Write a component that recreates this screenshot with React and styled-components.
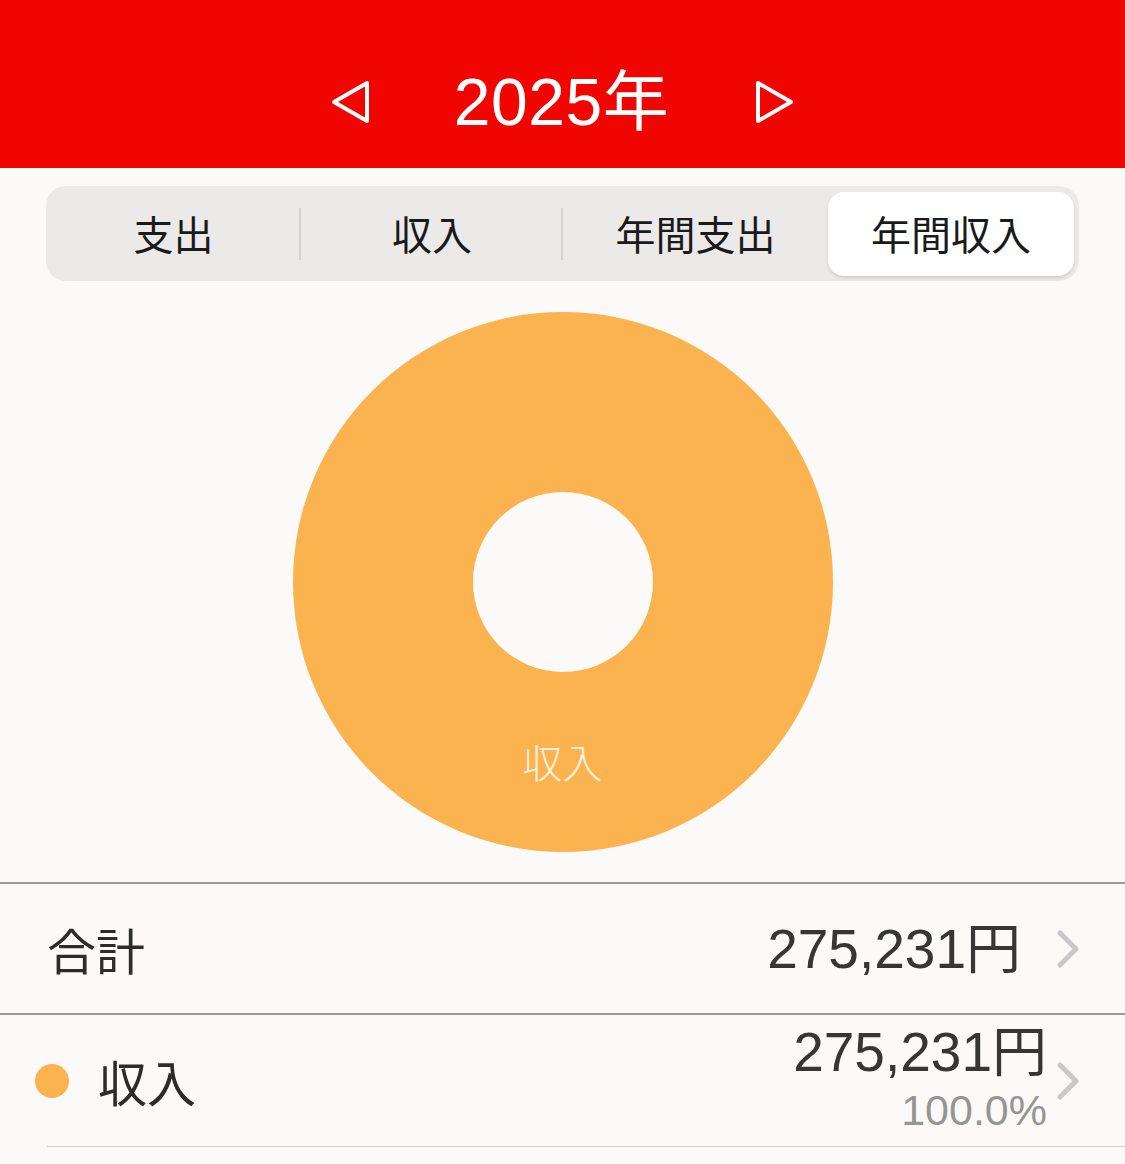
import React from "react";
import styled, { createGlobalStyle } from "styled-components";

const Global = createGlobalStyle`
  html, body { margin: 0; padding: 0; background: #fbfaf8; }
  body { font-family: "Noto Sans CJK JP", "Noto Sans", sans-serif; color: #333; }
`;

const NUM_FONT = `"Liberation Sans", "Noto Sans CJK JP", sans-serif`;

const Page = styled.div`
  width: 1125px;
  height: 1164px;
  overflow: hidden;
  background: #fbfaf8;
`;

const Header = styled.header`
  height: 168px;
  box-sizing: border-box;
  padding-top: 36px;
  background: #f00500;
  display: flex;
  align-items: center;
  justify-content: center;
`;

const NavButton = styled.button`
  width: 42px;
  height: 44px;
  border: none;
  background: none;
  padding: 0;
  display: flex;
  align-items: center;
  justify-content: center;
  cursor: pointer;
`;

const Year = styled.h1`
  margin: 0 84px 0 82px;
  font-family: ${NUM_FONT};
  font-size: 66px;
  font-weight: 400;
  color: #fff;
  line-height: 1;
  letter-spacing: 0.5px;
`;

const Segmented = styled.div`
  margin: 18px 46px 0;
  height: 95px;
  box-sizing: border-box;
  background: #ebeae9;
  border-radius: 20px;
  display: grid;
  grid-template-columns: 255px 262px 265px 246px;
  padding: 6px 5px 5px 0;
  align-items: stretch;
`;

const Tab = styled.div`
  position: relative;
  display: flex;
  align-items: center;
  justify-content: center;
  font-size: 40px;
  color: #1a1a1a;
  border-radius: 16px;
  padding-bottom: 2px;
  background: ${(p) => (p.$active ? "#fff" : "transparent")};
  box-shadow: ${(p) => (p.$active ? "0 2px 3px rgba(0,0,0,0.12)" : "none")};
  ${(p) =>
    p.$divider &&
    `&::after {
      content: "";
      position: absolute;
      right: 0;
      top: 16px;
      bottom: 16px;
      width: 2px;
      background: #d3d2d1;
    }`}
`;

const ChartArea = styled.div`
  height: 601px;
  display: flex;
  justify-content: center;
  padding-top: 31px;
  box-sizing: border-box;
`;

const Donut = styled.div`
  position: relative;
  width: 540px;
  height: 540px;
  border-radius: 50%;
  background: #fab34f;
  display: flex;
  align-items: center;
  justify-content: center;
`;

const Hole = styled.div`
  width: 180px;
  height: 180px;
  border-radius: 50%;
  background: #fbfaf8;
`;

const SliceLabel = styled.span`
  position: absolute;
  left: 0;
  right: 0;
  top: 429px;
  text-align: center;
  color: #fdf3e0;
  font-size: 40px;
  font-weight: 300;
  line-height: 1;
`;

const List = styled.div`
  border-top: 2px solid #9b9b9b;
`;

const Row = styled.div`
  display: flex;
  align-items: center;
  height: ${(p) => p.$h}px;
  box-sizing: border-box;
  padding: 0 44px 0 ${(p) => p.$pl}px;
  border-bottom: ${(p) => p.$border};
  margin-left: ${(p) => p.$ml || 0}px;
`;

const Label = styled.span`
  flex: 1;
  font-size: 49px;
  font-weight: 400;
  color: #2c2c2c;
  line-height: 1;
`;

const Dot = styled.span`
  width: 34px;
  height: 34px;
  border-radius: 50%;
  background: #fab34f;
  margin-right: 29px;
  flex: none;
`;

const Amount = styled.span`
  font-family: ${NUM_FONT};
  font-size: 55px;
  font-weight: 400;
  color: #363636;
  line-height: 56px;
`;

const AmountStack = styled.div`
  display: flex;
  flex-direction: column;
  align-items: flex-end;
  gap: 8px;
  margin-top: -5px;
`;

const Percent = styled.span`
  font-family: ${NUM_FONT};
  font-size: 43px;
  font-weight: 400;
  color: #959595;
  line-height: 44px;
`;

const Chevron = styled.span`
  display: flex;
  margin-left: ${(p) => p.$ml}px;
`;

const Tri = ({ dir }) => (
  <svg width="42" height="44" viewBox="0 0 42 44">
    {dir === "left" ? (
      <path d="M37 3 L4 22 L37 41 Z" fill="none" stroke="#fff" strokeWidth="4" strokeLinejoin="round" />
    ) : (
      <path d="M5 3 L38 22 L5 41 Z" fill="none" stroke="#fff" strokeWidth="4" strokeLinejoin="round" />
    )}
  </svg>
);

const ChevronIcon = () => (
  <svg width="26" height="40" viewBox="0 0 26 40">
    <path d="M5 4 L21 20 L5 36" fill="none" stroke="#c8c8cb" strokeWidth="5" strokeLinecap="round" strokeLinejoin="round" />
  </svg>
);

export default function App() {
  const tabs = ["支出", "収入", "年間支出", "年間収入"];
  return (
    <Page>
      <Global />
      <Header>
        <NavButton aria-label="前年">
          <Tri dir="left" />
        </NavButton>
        <Year>2025年</Year>
        <NavButton aria-label="翌年">
          <Tri dir="right" />
        </NavButton>
      </Header>
      <Segmented>
        {tabs.map((t, i) => (
          <Tab key={t} $active={i === 3} $divider={i < 2}>
            {t}
          </Tab>
        ))}
      </Segmented>
      <ChartArea>
        <Donut>
          <Hole />
          <SliceLabel>収入</SliceLabel>
        </Donut>
      </ChartArea>
      <List>
        <Row $h={131} $pl={47} $border="2px solid #9b9b9b">
          <Label>合計</Label>
          <Amount>275,231円</Amount>
          <Chevron $ml={34}>
            <ChevronIcon />
          </Chevron>
        </Row>
        <Row $h={131} $pl={35} $border="none">
          <Dot />
          <Label>収入</Label>
          <AmountStack>
            <Amount>275,231円</Amount>
            <Percent>100.0%</Percent>
          </AmountStack>
          <Chevron $ml={8}>
            <ChevronIcon />
          </Chevron>
        </Row>
        <Row $h={1} $pl={0} $ml={47} $border="1px solid #cfcfcf" />
      </List>
    </Page>
  );
}
